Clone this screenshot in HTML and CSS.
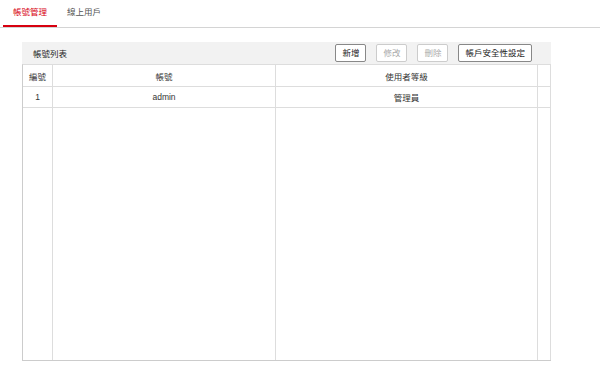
FILE: index.html
```html
<!DOCTYPE html>
<html>
<head>
<meta charset="utf-8">
<link rel="stylesheet" href="styles.css">
</head>
<body>
<div class="tabs">
  <div class="tab active">帳號管理</div>
  <div class="tab">線上用戶</div>
</div>
<div class="panel">
  <div class="panel-head">
    <div class="title">帳號列表</div>
    <div class="btns">
      <button class="btn">新增</button>
      <button class="btn disabled">修改</button>
      <button class="btn disabled">刪除</button>
      <button class="btn">帳戶安全性設定</button>
    </div>
  </div>
  <div class="grid">
    <div class="cell">編號</div>
    <div class="cell">帳號</div>
    <div class="cell">使用者等級</div>
    <div class="cell"></div>
    <div class="cell">1</div>
    <div class="cell">admin</div>
    <div class="cell">管理員</div>
    <div class="cell"></div>
    <div class="cell fill"></div>
    <div class="cell fill"></div>
    <div class="cell fill"></div>
    <div class="cell fill"></div>
  </div>
</div>
</body>
</html>
```
FILE: styles.css
```css
* { box-sizing: border-box; }
html, body { margin: 0; padding: 0; background: #fff; }
body {
  font-family: "Liberation Sans", "Noto Sans CJK TC", sans-serif;
  font-size: 8.5px;
  color: #333;
}
.tabs {
  display: flex;
  height: 28px;
  padding-left: 3px;
  border-bottom: 1px solid #d4d4d4;
}
.tab {
  height: 27px;
  padding: 0 10px;
  line-height: 25px;
  color: #555;
  border-bottom: 2px solid transparent;
}
.tab.active {
  color: #d7000f;
  border-bottom-color: #d7000f;
}
.panel {
  margin: 14px 0 0 22px;
  width: 529px;
}
.panel-head {
  height: 22px;
  background: #f2f2f2;
  display: flex;
  align-items: center;
  justify-content: space-between;
  padding: 0 19px 0 11px;
}
.title { color: #222; }
.btns { display: flex; gap: 10px; }
.btn {
  font: inherit;
  height: 18px;
  padding: 0 6px;
  background: #fff;
  border: 1px solid #888;
  border-radius: 2px;
  color: #222;
  line-height: 16px;
}
.btn.disabled {
  border-color: #ccc;
  color: #aaa;
}
.grid {
  display: grid;
  grid-template-columns: 30px 223px 262px 13px;
  grid-template-rows: 22px 21px 252px;
  border-left: 1px solid #ccc;
  border-top: 1px solid #ddd;
  border-bottom: 1px solid #ccc;
}
.cell {
  border-right: 1px solid #ddd;
  border-bottom: 1px solid #ddd;
  display: flex;
  align-items: center;
  justify-content: center;
}
.cell.fill { border-bottom: none; }
```
